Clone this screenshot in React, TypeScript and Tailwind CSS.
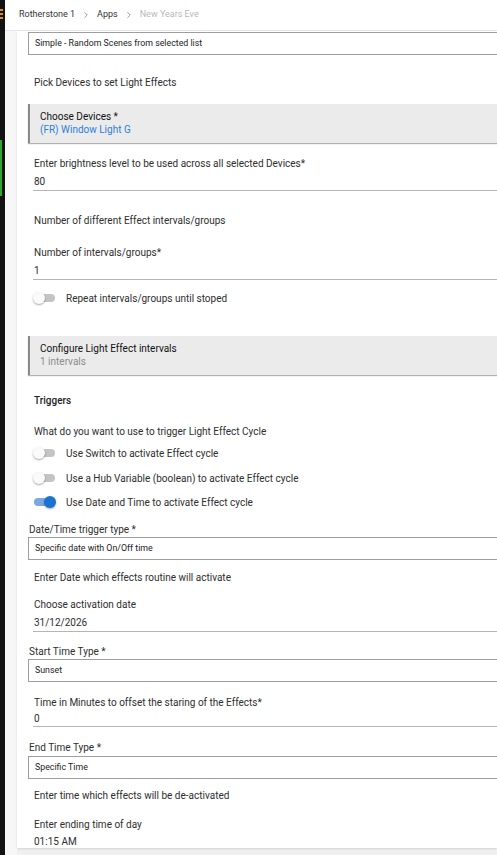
import { ChevronRight } from "lucide-react";

const font = { fontFamily: "Roboto, 'Liberation Sans', sans-serif" };

function Select({ value }: { value: string }) {
  return (
    <div className="mr-[-40px] flex h-[23px] items-center border border-[#9e9e9e] bg-white pl-[6px] text-[8.8px] text-[#222]">
      {value}
    </div>
  );
}

function Text({ children, className = "" }: { children: React.ReactNode; className?: string }) {
  return <div className={`h-[14px] pl-[6px] text-[10px] leading-[14px] text-[#2e2e2e] ${className}`}>{children}</div>;
}

function Input({ value, h = "h-[18px]" }: { value: string; h?: string }) {
  return (
    <div className={`ml-[5px] mr-[-40px] flex items-center border-b border-[#b5b5b5] pl-[1px] text-[10px] text-[#2e2e2e] ${h}`}>
      {value}
    </div>
  );
}

function Toggle({ on, label, className = "" }: { on?: boolean; label: string; className?: string }) {
  return (
    <div className={`flex h-[14px] items-center pl-[5px] ${className}`}>
      <div className="relative h-[14px] w-[23px]">
        <div className={`absolute left-[1px] top-[3px] h-[8px] w-[21px] rounded-full ${on ? "bg-[#79a9e0]" : "bg-[#c4c4c4]"}`} />
        <div
          className={`absolute top-[1px] h-[12px] w-[12px] rounded-full shadow-[0_1px_2px_rgba(0,0,0,0.35)] ${
            on ? "left-[11px] bg-[#1a73d0]" : "left-0 bg-[#fafafa]"
          }`}
        />
      </div>
      <span className="ml-[10px] text-[10px] text-[#2e2e2e]">{label}</span>
    </div>
  );
}

function Panel({ title, sub, blue }: { title: string; sub: string; blue?: boolean }) {
  return (
    <div className="mr-[-40px] h-[39px] border-l-2 border-[#8a8a8a] bg-[#ebebeb] pl-[10px] pt-[6px] shadow-[0_1px_1px_rgba(0,0,0,0.3)]">
      <div className="h-[13px] text-[10px] leading-[13px] text-[#111]">{title}</div>
      <div className={`h-[13px] text-[10px] leading-[13px] ${blue ? "text-[#2f7fd8]" : "text-[#8c8c8c]"}`}>{sub}</div>
    </div>
  );
}

function Label({ children, className = "" }: { children: React.ReactNode; className?: string }) {
  return <div className={`h-[14px] pl-[1px] text-[10px] leading-[14px] text-[#2e2e2e] ${className}`}>{children}</div>;
}

export default function App() {
  return (
    <div style={font} className="relative flex h-[855px] w-[497px] overflow-hidden bg-[#f0f0f0]">
      <div className="relative w-[5px] shrink-0 bg-[#121212]">
        <div className="absolute left-0 top-[9px] h-[2px] w-[3px] bg-[#e08a1e]" />
        <div className="absolute left-0 top-[13px] h-[2px] w-[3px] bg-[#e08a1e]" />
        <div className="absolute left-0 top-[17px] h-[2px] w-[3px] bg-[#e08a1e]" />
        <div className="absolute left-0 top-[140px] h-[56px] w-[2px] bg-[#2ea52e]" />
      </div>
      <div className="flex min-w-0 flex-1 flex-col">
        <div className="flex h-[31px] shrink-0 items-center gap-[6px] border-b border-[#e6e6ea] bg-white pl-[14px] text-[9px] text-[#333]">
          <span>Rotherstone 1</span>
          <ChevronRight size={10} strokeWidth={1.6} className="text-[#666]" />
          <span>Apps</span>
          <ChevronRight size={10} strokeWidth={1.6} className="text-[#666]" />
          <span className="text-[#b9b9b9]">New Years Eve</span>
        </div>
        <div className="flex flex-1">
          <div className="w-[12px] shrink-0 bg-[#f7f7f7]" />
          <div className="h-[817px] flex-1 bg-white pl-[11px] shadow-[0_1px_2px_rgba(0,0,0,0.12)]">
            <div className="mt-[1px]">
              <Select value="Simple - Random Scenes from selected list" />
            </div>
            <Text className="mt-[21px] text-[10.5px]">Pick Devices to set Light Effects</Text>
            <div className="mt-[14px]">
              <Panel title="Choose Devices *" sub="(FR) Window Light G" blue />
            </div>
            <Text className="mt-[14px]">Enter brightness level to be used across all selected Devices*</Text>
            <div className="mt-[2px]">
              <Input value="80" />
            </div>
            <Text className="mt-[23px]">Number of different Effect intervals/groups</Text>
            <Text className="mt-[18px]">Number of intervals/groups*</Text>
            <div className="mt-[1px]">
              <Input value="1" h="h-[19px]" />
            </div>
            <Toggle className="mt-[11px]" label="Repeat intervals/groups until stoped" />
            <div className="mt-[31px]">
              <Panel title="Configure Light Effect intervals" sub="1 intervals" />
            </div>
            <Text className="mt-[19px] font-medium text-[#222]">Triggers</Text>
            <Text className="mt-[17px]">What do you want to use to trigger Light Effect Cycle</Text>
            <Toggle className="mt-[7px]" label="Use Switch to activate Effect cycle" />
            <Toggle className="mt-[11px]" label="Use a Hub Variable (boolean) to activate Effect cycle" />
            <Toggle className="mt-[10px]" on label="Use Date and Time to activate Effect cycle" />
            <Label className="mt-[14px]">Date/Time trigger type *</Label>
            <div>
              <Select value="Specific date with On/Off time" />
            </div>
            <Text className="mt-[11px]">Enter Date which effects routine will activate</Text>
            <Text className="mt-[13px]">Choose activation date</Text>
            <div className="mt-[2px]">
              <Input value="31/12/2026" />
            </div>
            <Label className="mt-[13px]">Start Time Type *</Label>
            <div>
              <Select value="Sunset" />
            </div>
            <Text className="mt-[14px]">Time in Minutes to offset the staring of the Effects*</Text>
            <div className="mt-[1px]">
              <Input value="0" h="h-[16px]" />
            </div>
            <Label className="mt-[14px]">End Time Type *</Label>
            <div className="mt-[1px]">
              <Select value="Specific Time" />
            </div>
            <Text className="mt-[10px]">Enter time which effects will be de-activated</Text>
            <Text className="mt-[15px]">Enter ending time of day</Text>
            <Text className="mt-[3px]">01:15 AM</Text>
          </div>
        </div>
      </div>
    </div>
  );
}
